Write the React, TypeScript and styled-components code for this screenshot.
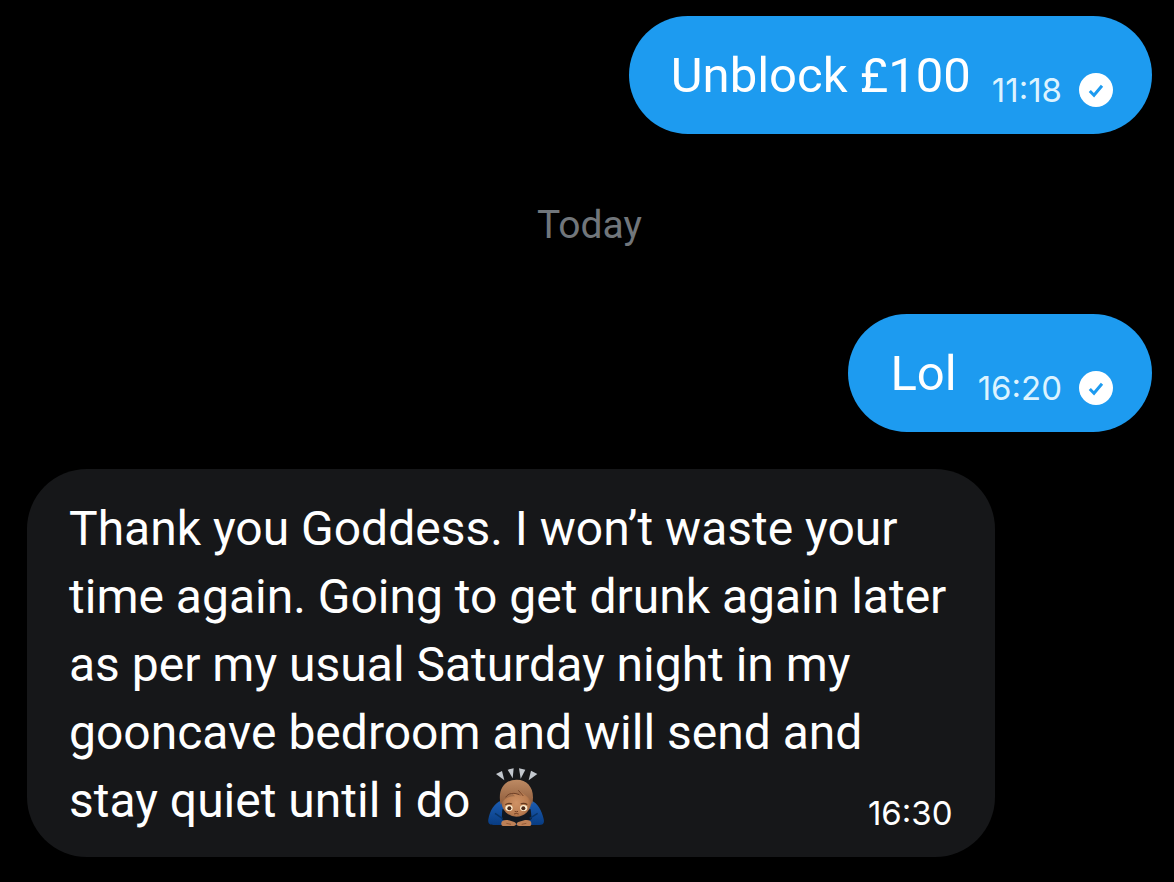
import React from 'react';
import styled, { createGlobalStyle } from 'styled-components';

const Global = createGlobalStyle`
  * { box-sizing: border-box; }
  body { margin: 0; background: #000; color: #fff; font-family: Roboto, "Liberation Sans", sans-serif; }
`;

const Thread = styled.main`
  display: flex;
  flex-direction: column;
  padding: 16px 22px 24px 27px;
`;

const SentBubble = styled.article`
  display: flex;
  align-items: flex-end;
  align-self: flex-end;
  max-width: 86%;
  padding: 26px 38px 24px 42px;
  border-radius: 60px;
  background: #1d9bf0;
`;

const ReceivedBubble = styled.article`
  display: grid;
  align-self: flex-start;
  max-width: 86%;
  margin-top: 37px;
  padding: 26px 42px 22px;
  border-radius: 60px;
  background: #161719;
`;

const Text = styled.p<{ $size: number }>`
  grid-area: 1 / 1;
  margin: 0;
  font-size: ${p => p.$size}px;
  line-height: 68px;
`;

const Meta = styled.div<{ $sent?: boolean }>`
  grid-area: 1 / 1;
  place-self: end;
  display: flex;
  align-items: center;
  gap: 16px;
  margin-left: ${p => (p.$sent ? 21 : 0)}px;
  padding-bottom: ${p => (p.$sent ? 2 : 4)}px;
  font-family: Inter, Roboto, sans-serif;
  font-size: 33px;
  line-height: 36px;
  color: ${p => (p.$sent ? '#dcf3ff' : '#fff')};
`;

const Emoji = styled.svg`
  vertical-align: -9px;
  margin-left: 6px;
`;

const DayLabel = styled.h2`
  margin: 65px 0 63px;
  text-align: center;
  color: #71767b;
  font-size: 39px;
  line-height: 52px;
  font-weight: 400;
`;

const Delivered = () => (
  <svg width="36" height="36" viewBox="0 0 36 36" role="img" aria-label="Sent">
    <circle cx="18" cy="18" r="17" fill="#fff" />
    <path d="M11.8 19l4.2 4.2 8-9.4" fill="none" stroke="#1d9bf0" strokeWidth="3" />
  </svg>
);

const Bowing = () => (
  <Emoji width="56" height="58" viewBox="27 24 168 174" role="img" aria-label="Person bowing">
    <defs>
      <radialGradient id="face" cx=".5" cy=".55" r=".55">
        <stop offset="0" stopColor="#cf9265" />
        <stop offset=".7" stopColor="#b97c50" />
        <stop offset="1" stopColor="#8c5836" />
      </radialGradient>
      <linearGradient id="hair" x1="0" y1="0" x2="0" y2="1">
        <stop offset="0" stopColor="#bd8a63" />
        <stop offset="1" stopColor="#8f5c3b" />
      </linearGradient>
      <linearGradient id="sleeve" x1="0" y1="0" x2="0" y2="1">
        <stop offset="0" stopColor="#1c5eb4" />
        <stop offset="1" stopColor="#083c82" />
      </linearGradient>
    </defs>
    <g fill="#c3c8ce">
      <path d="M51 42l18-9 7 28z" />
      <path d="M86 29l18-4-3 30z" />
      <path d="M120 25l19 4-14 27z" />
      <path d="M156 32l19 10-26 19z" />
    </g>
    <path d="M66 122c-20 7-34 30-38 56-2 13 4 17 16 17h136c12 0 17-5 14-18-6-27-18-48-37-55z" fill="url(#sleeve)" />
    <path d="M70 148l-2 30 26 14h38l26-15-3-29z" fill="#111820" />
    <path d="M48 160l23 16M176 160l-24 15" stroke="#083468" strokeWidth="4" />
    <ellipse cx="112" cy="124" rx="45" ry="46" fill="url(#face)" />
    <path d="M65 134c-10-43 10-75 48-75 37 0 57 32 46 75-3-11-7-18-14-24l-25-18 7 16-31-12 12 13c-16-1-33 5-43 25z" fill="url(#hair)" />
    <path d="M80 112c8-13 23-15 41-8M118 91l15 17" fill="none" stroke="#704026" strokeWidth="3" />
    <path d="M79 134q9-7 20-2M125 132q10-5 20 2" fill="none" stroke="#63391f" strokeWidth="4" />
    <ellipse cx="90" cy="144" rx="11" ry="9" fill="#fff0d2" />
    <ellipse cx="134" cy="144" rx="11" ry="9" fill="#fff0d2" />
    <circle cx="91" cy="145" r="6" fill="#4b2918" />
    <circle cx="133" cy="145" r="6" fill="#4b2918" />
    <path d="M107 154q5 3 10 0M105 162q7-3 14 0" fill="none" stroke="#744125" strokeWidth="3" />
    <path d="M67 190c0-9 9-11 19-10l20 6c8 3 6 12-2 12H72c-4 0-5-3-5-8z" fill="#bd8056" />
    <path d="M157 190c0-9-9-11-19-10l-20 6c-8 3-6 12 2 12h32c4 0 5-3 5-8z" fill="#bd8056" />
    <path d="M82 190l14 3M142 190l-14 3" stroke="#7a4729" strokeWidth="2" />
  </Emoji>
);

export default function App() {
  return (
    <>
      <Global />
      <Thread>
        <SentBubble>
          <Text $size={49}>Unblock £100</Text>
          <Meta $sent>
            <time>11:18</time>
            <Delivered />
          </Meta>
        </SentBubble>
        <DayLabel>Today</DayLabel>
        <SentBubble>
          <Text $size={49}>Lol</Text>
          <Meta $sent>
            <time>16:20</time>
            <Delivered />
          </Meta>
        </SentBubble>
        <ReceivedBubble>
          <Text $size={48}>
            Thank you Goddess. I won’t waste your time again. Going to get drunk again later
            as per my usual Saturday night in my gooncave bedroom and will send and
            stay quiet until i do <Bowing />
          </Text>
          <Meta>
            <time>16:30</time>
          </Meta>
        </ReceivedBubble>
      </Thread>
    </>
  );
}
